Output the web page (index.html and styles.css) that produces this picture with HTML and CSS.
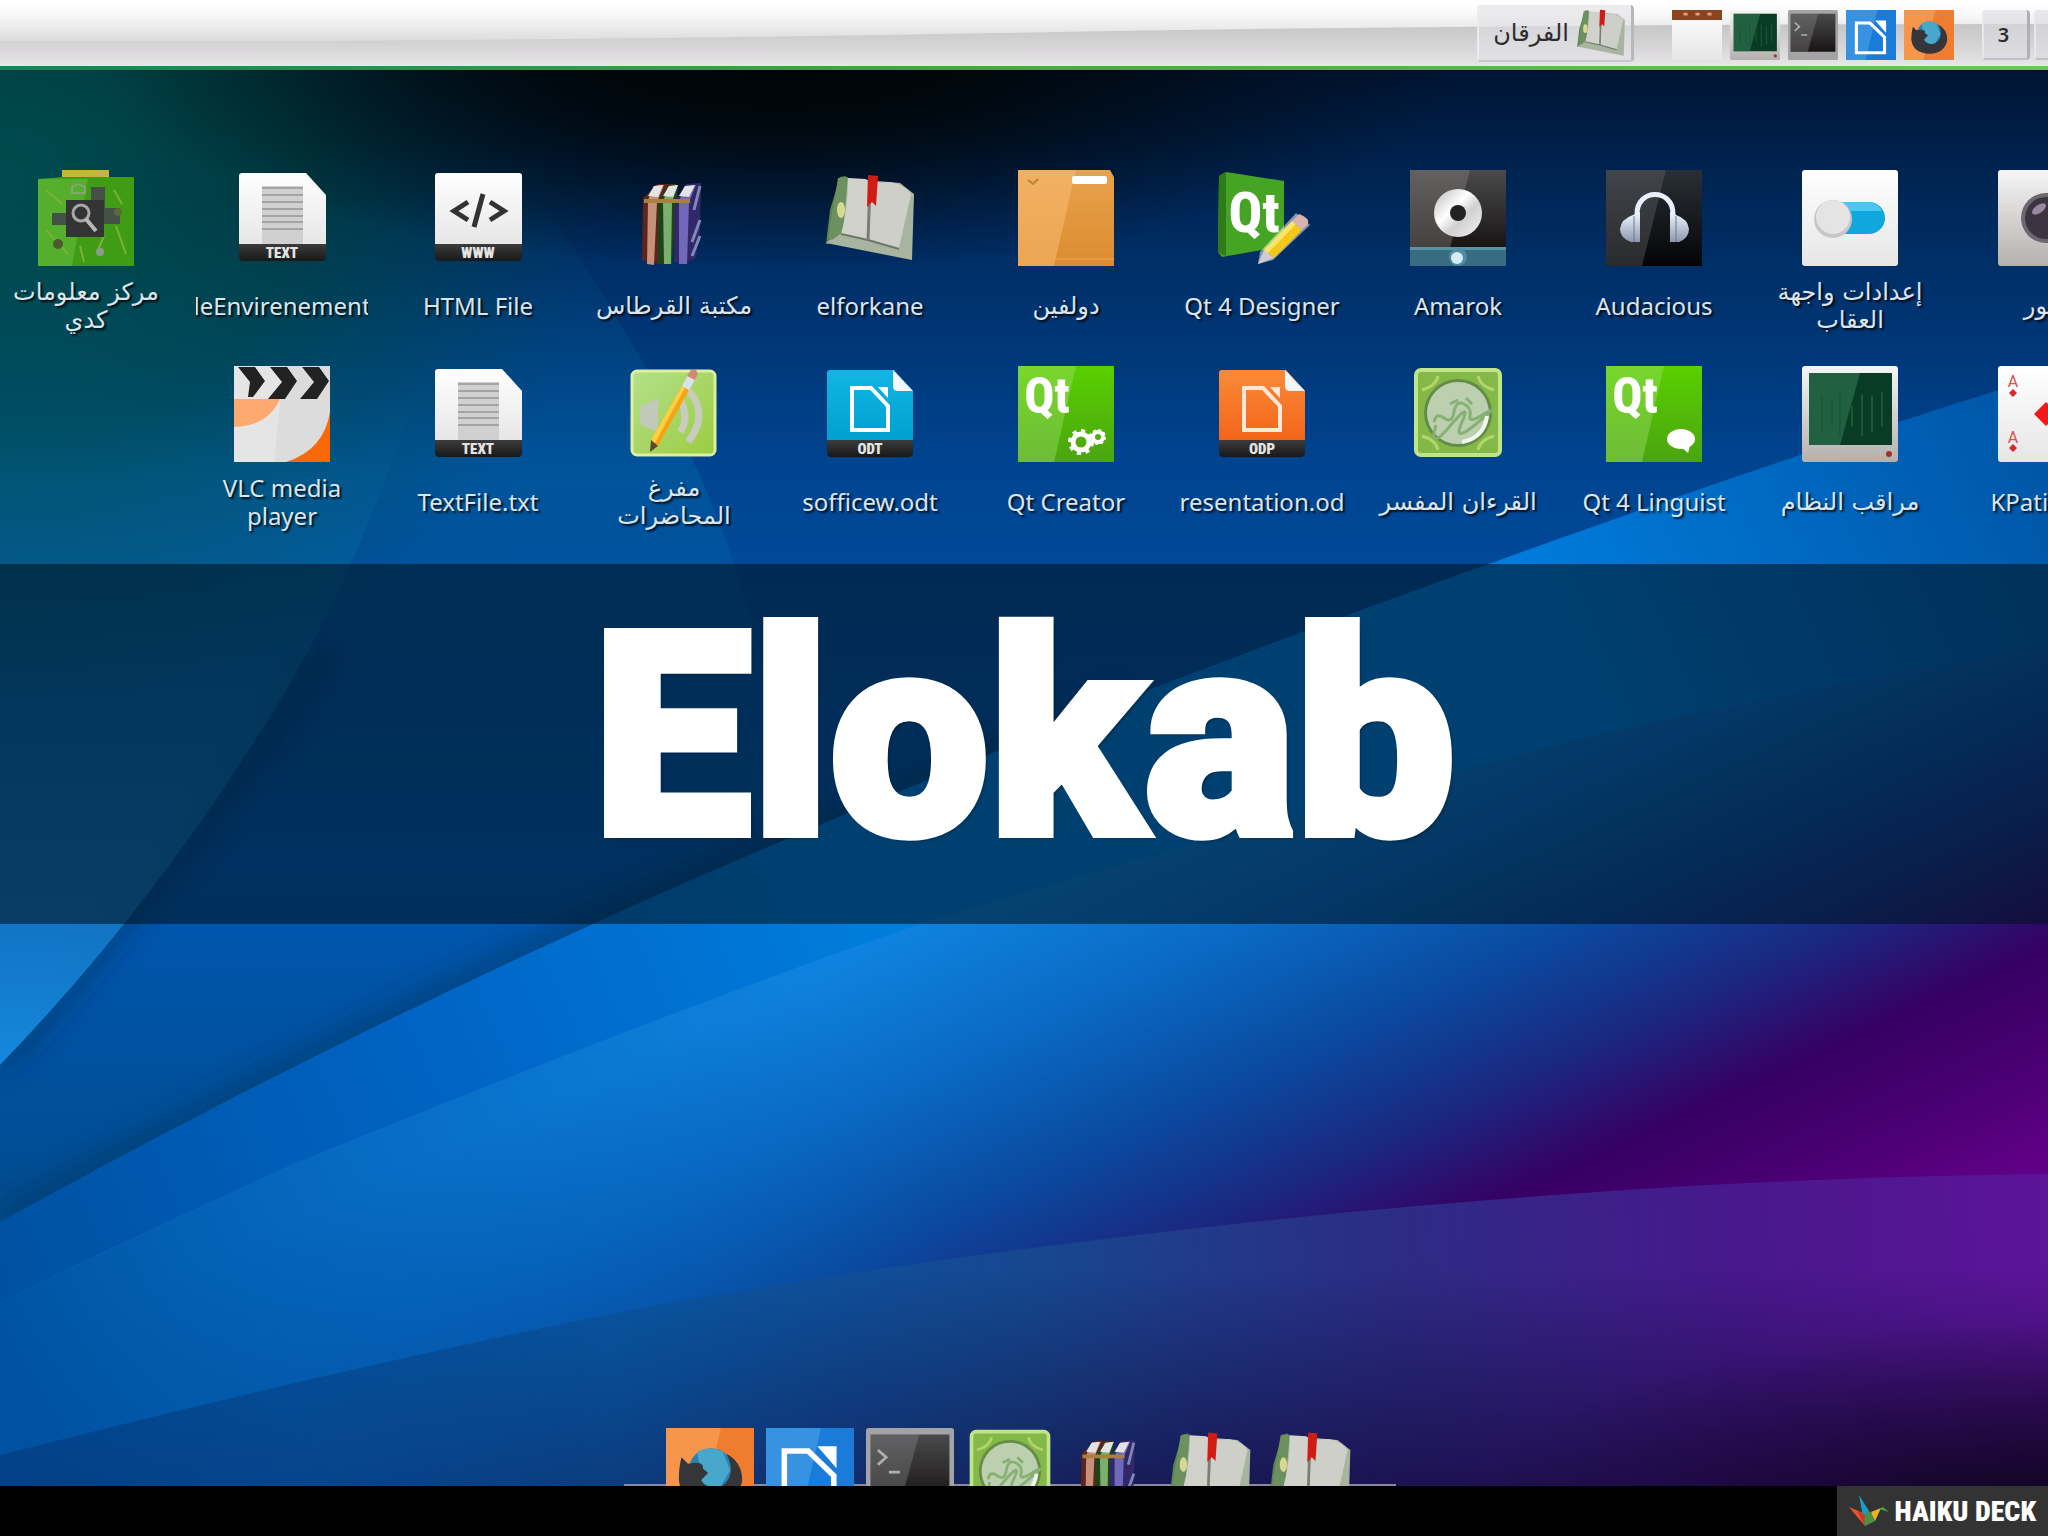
FILE: index.html
```
<!DOCTYPE html>
<html lang="en">
<head>
<meta charset="utf-8">
<meta name="viewport" content="width=device-width, initial-scale=1">
<title>Elokab</title>
<link rel="stylesheet" href="styles.css">
</head>
<body>

<!-- Shared icon shapes and gradients -->
<svg class="defs" width="0" height="0" aria-hidden="true">
  <defs>
    <linearGradient id="g-paper" x1="0" y1="0" x2="0" y2="1"><stop offset="0" stop-color="#fff"/><stop offset="1" stop-color="#e6e6e6"/></linearGradient>
    <linearGradient id="g-silver" x1="0" y1="0" x2="0" y2="1"><stop offset="0" stop-color="#f6f6f6"/><stop offset="1" stop-color="#b4b0ae"/></linearGradient>
    <linearGradient id="g-strip" x1="0" y1="0" x2="0" y2="1"><stop offset="0" stop-color="#3c3c3c"/><stop offset="1" stop-color="#181818"/></linearGradient>
    <linearGradient id="g-green" x1="0" y1="0" x2="0" y2="1"><stop offset="0" stop-color="#5ad000"/><stop offset="1" stop-color="#4aa410"/></linearGradient>
    <linearGradient id="g-orange" x1="0" y1="0" x2="0" y2="1"><stop offset="0" stop-color="#fb8a3a"/><stop offset="1" stop-color="#f26418"/></linearGradient>
    <linearGradient id="g-cyan" x1="0" y1="0" x2="0" y2="1"><stop offset="0" stop-color="#10b6e4"/><stop offset="1" stop-color="#00a0d0"/></linearGradient>
    <linearGradient id="g-folder" x1="0" y1="0" x2="0" y2="1"><stop offset="0" stop-color="#e8a24c"/><stop offset="1" stop-color="#dc8c30"/></linearGradient>
    <linearGradient id="g-dark" x1="0" y1="0" x2="0" y2="1"><stop offset="0" stop-color="#4a4a4c"/><stop offset="1" stop-color="#181414"/></linearGradient>
    <linearGradient id="g-black" x1="0" y1="0" x2="0" y2="1"><stop offset="0" stop-color="#2a3036"/><stop offset="1" stop-color="#040406"/></linearGradient>
    <linearGradient id="g-lime" x1="0" y1="0" x2="1" y2="1"><stop offset="0" stop-color="#b4e08c"/><stop offset="1" stop-color="#9ccc40"/></linearGradient>
    <linearGradient id="g-disc" x1="0" y1="0" x2="1" y2="1"><stop offset="0" stop-color="#b8b8b8"/><stop offset=".4" stop-color="#fff"/><stop offset=".6" stop-color="#d0d0d0"/><stop offset="1" stop-color="#f4f4f4"/></linearGradient>
    <linearGradient id="g-phone" x1="0" y1="0" x2="0" y2="1"><stop offset="0" stop-color="#f4f8ff"/><stop offset="1" stop-color="#8c98b0"/></linearGradient>

    <symbol id="i-doc" viewBox="0 0 96 96">
      <path d="M8 3H72L92 25V76H5V6Q5 3 8 3Z" fill="url(#g-paper)"/>
      <path d="M28 16H69V74H28Z" fill="#d0d0d0"/>
      <path d="M28 18H69M28 25H69M28 32H69M28 39H69M28 46H69M28 52H69M28 59H69" stroke="#a4a4a4" stroke-width="2"/>
      <path d="M5 74H92V86Q92 91 88 91H9Q5 91 5 86Z" fill="url(#g-strip)"/>
      <text class="tag" x="48" y="88">TEXT</text>
    </symbol>
    <symbol id="i-html" viewBox="0 0 96 96">
      <path d="M8 3H89Q92 3 92 6V76H5V6Q5 3 8 3Z" fill="url(#g-paper)"/>
      <path d="M38 32 24 41 38 50M60 32 74 41 60 50M53 24 44 57" fill="none" stroke="#333" stroke-width="5"/>
      <path d="M5 74H92V86Q92 91 88 91H9Q5 91 5 86Z" fill="url(#g-strip)"/>
      <text class="tag" x="48" y="88">WWW</text>
    </symbol>
    <symbol id="i-odt" viewBox="0 0 96 96">
      <path d="M8 4H72L91 25V76H5V7Q5 4 8 4Z" fill="url(#g-cyan)"/>
      <path d="M71 4 91 25H76Q71 25 71 20Z" fill="#f4f8fa"/>
      <path d="M30 22H49L66 40V64H30Z" fill="none" stroke="#fff" stroke-width="4"/>
      <path d="M56 21H66V32Z" fill="#fff"/>
      <path d="M5 74H91V86Q91 91 87 91H9Q5 91 5 86Z" fill="url(#g-strip)"/>
      <text class="tag" x="48" y="88">ODT</text>
    </symbol>
    <symbol id="i-odp" viewBox="0 0 96 96">
      <path d="M8 4H72L91 25V76H5V7Q5 4 8 4Z" fill="url(#g-orange)"/>
      <path d="M71 4 91 25H76Q71 25 71 20Z" fill="#f4f8fa"/>
      <path d="M30 22H49L66 40V64H30Z" fill="none" stroke="#ffe8d8" stroke-width="4"/>
      <path d="M56 21H66V32Z" fill="#ffe8d8"/>
      <path d="M5 74H91V86Q91 91 87 91H9Q5 91 5 86Z" fill="url(#g-strip)"/>
      <text class="tag" x="48" y="88">ODP</text>
    </symbol>
    <symbol id="i-chip" viewBox="0 0 96 96">
      <path d="M0 9 24 7V0H71V7H96V96H0Z" fill="#3f9c14"/>
      <path d="M24 0H71V7H24Z" fill="#c8b43c"/>
      <path d="M0 9H50L34 96H0Z" fill="#6cc044" opacity=".5"/>
      <path d="M8 20 24 34M8 60 30 84M78 56 88 84M60 80 66 66M42 76 46 92M76 20 84 34M12 44H26" stroke="#78b43c" stroke-width="2" fill="none"/>
      <path d="M53 17H67V38H82V54H66V62H53ZM14 43H30V55H14Z" fill="#455048"/>
      <path d="M34 17 39 14 47 17V23H34Z" fill="none" stroke="#86a476" stroke-width="2"/>
      <circle cx="20" cy="74" r="5" fill="#4c5a34"/><circle cx="80" cy="42" r="4" fill="#5a6c34"/><circle cx="62" cy="82" r="4" fill="#8c9c8c"/>
      <path d="M28 30H66V67H28Z" fill="#343434"/>
      <circle cx="43" cy="43" r="8" fill="none" stroke="#a8a8a8" stroke-width="3"/><path d="M48 49 58 61" stroke="#b8b8b8" stroke-width="4"/>
    </symbol>
    <symbol id="i-books" viewBox="-8 0 96 96">
      <path d="M9 28 24 14H42L40 28 30 95 8 90Z" fill="#5c241c"/>
      <path d="M14 30 20 16 30 15 23 32 20 95 13 94Z" fill="#c89078"/>
      <path d="M24 30 36 14 44 16 38 94 24 94Z" fill="#1c4418"/>
      <path d="M29 32 34 17 44 15 38 32 37 94 30 94Z" fill="#7cae6c"/>
      <path d="M40 32 52 14 67 13 66 60 62 88 50 94 40 92Z" fill="#302868"/>
      <path d="M45 32 50 17 62 15 55 32 53 94 45 94Z" fill="#7068b8"/>
      <path d="M14 26 20 16 29 15 24 27ZM29 26 35 16 44 15 39 27ZM45 26 51 16 61 15 55 27Z" fill="#e4e4e4"/>
      <path d="M10 31H56" stroke="#a88040" stroke-width="4"/>
      <path d="M60 40 66 16M58 72 66 50M58 86 66 66" stroke="#8088b8" stroke-width="3"/>
    </symbol>
    <symbol id="i-book" viewBox="0 0 96 96">
      <path d="M18 7 24 6 22 50 14 72 4 74 8 40Z" fill="#5c8450"/>
      <path d="M20 8 44 10 78 13 92 24 90 90 4 73 13 66Z" fill="#a9b4a0"/>
      <path d="M16 8 26 7 21 62 10 70 6 68Z" fill="#6c9060"/>
      <path d="M26 8 44 9 48 13 46 70 19 64Q26 40 26 8Z" fill="#d2d2cc"/>
      <path d="M50 13 68 12Q82 14 89 24L77 78 47 70Z" fill="#cfcfca"/>
      <path d="M19 64 46 70 77 79" fill="none" stroke="#6c7868" stroke-width="2"/>
      <path d="M48 12 46 70" stroke="#788074" stroke-width="3"/>
      <ellipse cx="19" cy="40" rx="4" ry="8" fill="#d8d890"/>
      <path d="M46 5 56 6 54 36 50 32 45 37Z" fill="#d01c14"/>
    </symbol>
    <symbol id="i-folder" viewBox="0 0 96 96">
      <path d="M0 0H92L96 7V96H0Z" fill="url(#g-folder)"/>
      <path d="M0 0H58L36 96H0Z" fill="#fcc078" opacity=".5"/>
      <path d="M10 10 15 14 20 9" fill="none" stroke="#b88440" stroke-width="2"/>
      <rect x="54" y="6" width="35" height="8" rx="2" fill="#fff"/>
      <path d="M0 89H96" stroke="#f0a850" stroke-width="1"/>
    </symbol>
    <symbol id="i-designer" viewBox="0 0 96 96">
      <path d="M5 6 12 2 70 11V76L8 87 4 82Z" fill="#46a424"/>
      <path d="M5 6 12 2V86L4 82Z" fill="#2c7c18"/>
      <text class="qt" x="40" y="62" font-size="56">Qt</text>
      <path d="M46 82 82 43 96 55 59 90 44 94Z" fill="#fff" opacity=".5"/>
      <path d="M50 80 78 51 88 60 60 88Z" fill="#f4c818"/>
      <path d="M50 80 78 51 82 54 53 84Z" fill="#fce468"/>
      <path d="M78 51 85 44Q96 48 94 54L88 60Z" fill="#d8b4b0"/>
      <path d="M50 80 60 88 44 94Z" fill="#d0ccd0"/>
    </symbol>
    <symbol id="i-amarok" viewBox="0 0 96 96">
      <path d="M0 0H96V78H0Z" fill="url(#g-dark)"/>
      <path d="M0 0H60L40 78H0Z" fill="#8a8480" opacity=".4"/>
      <circle cx="48" cy="43" r="24" fill="url(#g-disc)"/><circle cx="48" cy="43" r="8" fill="#222"/>
      <path d="M0 77H96V96H0Z" fill="#386c80"/><path d="M0 77H96V80H0Z" fill="#5894a4"/>
      <circle cx="48" cy="87" r="9" fill="#508ca4"/><circle cx="47" cy="88" r="6" fill="#d4ecf4"/>
    </symbol>
    <symbol id="i-audacious" viewBox="0 0 96 96">
      <path d="M0 0H96V96H0Z" fill="url(#g-black)"/>
      <path d="M0 0H60L36 96H0Z" fill="#64666a" opacity=".4"/>
      <path d="M31 56V44C31 18 67 18 67 44V56" fill="none" stroke="#e8f0fc" stroke-width="5"/>
      <path d="M27 45 34 42V72H25Q14 68 14 59 15 49 27 45ZM70 45 64 42V72H73Q83 68 83 59 82 49 70 45Z" fill="url(#g-phone)"/>
      <path d="M28 46V72M70 46V72" stroke="#6c7890" stroke-width="1"/>
    </symbol>
    <symbol id="i-toggle" viewBox="0 0 96 96">
      <rect width="96" height="96" rx="3" fill="url(#g-paper)"/>
      <path d="M38 32H67A16 16 0 0 1 67 64H38Z" fill="#10a8dc"/><path d="M40 32H67Q76 33 80 41H40Z" fill="#48c8f0"/>
      <circle cx="31" cy="49" r="19" fill="#c8c6c6"/><circle cx="31" cy="47" r="17" fill="#e4e4e4"/>
    </symbol>
    <symbol id="i-camera" viewBox="0 0 96 96">
      <rect width="96" height="96" rx="3" fill="url(#g-silver)"/>
      <circle cx="48" cy="48" r="25" fill="#6c6870"/><circle cx="48" cy="48" r="21" fill="#3c3440"/><ellipse cx="41" cy="39" rx="8" ry="4" fill="#9888a0" transform="rotate(-35 41 39)"/>
    </symbol>
    <symbol id="i-vlc" viewBox="0 0 96 96">
      <path d="M0 0H96V96H0Z" fill="#dcdcdc"/>
      <path d="M0 33H46Q34 60 0 61Z" fill="#fc8c40"/>
      <path d="M96 46V96H52Q90 84 96 46Z" fill="#fa6808"/>
      <path d="M0 0H50L40 96H0Z" fill="#fff" opacity=".25"/>
      <path d="M4 1H21L31 15 19 31H14L16 16ZM36 1H53L63 15 51 33H34L48 16ZM68 1H85L95 15 83 33H66L80 16Z" fill="#222"/>
    </symbol>
    <symbol id="i-audio" viewBox="0 0 96 96">
      <rect x="6" y="5" width="83" height="84" rx="5" fill="url(#g-lime)" stroke="#dcf0a0" stroke-width="3"/>
      <path d="M14 40 22 37 32 32V66L22 62 14 58Z" fill="#c4c8b8"/>
      <path d="M54 34Q64 52 54 66M62 24Q84 48 62 76" fill="none" stroke="#c8ccbc" stroke-width="7"/>
      <path d="M25 74 56 20 63 24 32 80Z" fill="#f4a414"/><path d="M25 74 56 20 59 22 29 77Z" fill="#fcd040"/>
      <path d="M56 20 62 9 70 12 63 24Z" fill="#dce0e8"/><path d="M61 10 65 4H70L72 8 69 14Z" fill="#d08878"/><path d="M25 74 32 80 24 86Z" fill="#5c4830"/>
    </symbol>
    <symbol id="i-qtgear" viewBox="0 0 96 96">
      <path d="M0 0H96V96H0Z" fill="url(#g-green)"/><path d="M0 0H58L36 96H0Z" fill="#a4e070" opacity=".4"/>
      <text class="qt" x="29" y="47" font-size="50">Qt</text>
      <circle cx="63" cy="76" r="8" fill="none" stroke="#fff" stroke-width="5"/><circle cx="63" cy="76" r="11" fill="none" stroke="#fff" stroke-width="4" stroke-dasharray="4 4.600"/>
      <circle cx="80" cy="71" r="5" fill="none" stroke="#fff" stroke-width="4"/><circle cx="80" cy="71" r="7" fill="none" stroke="#fff" stroke-width="2" stroke-dasharray="3 2.500"/>
    </symbol>
    <symbol id="i-linguist" viewBox="0 0 96 96">
      <path d="M0 0H96V96H0Z" fill="url(#g-green)"/><path d="M0 0H58L36 96H0Z" fill="#a4e070" opacity=".4"/>
      <text class="qt" x="29" y="47" font-size="50">Qt</text>
      <ellipse cx="75" cy="73" rx="14" ry="10" fill="#fff"/><path d="M74 80H84L82 87Z" fill="#fff"/>
    </symbol>
    <symbol id="i-quran" viewBox="0 0 96 96">
      <rect x="6" y="4" width="84" height="85" rx="5" fill="#84b848" stroke="#c0e488" stroke-width="4"/>
      <path d="M12 24Q26 20 28 10M84 24Q70 20 68 10M12 70Q26 74 28 84M84 70Q70 74 68 84" fill="none" stroke="#b4d46c" stroke-width="3"/>
      <circle cx="48" cy="47" r="34" fill="#648c48"/><circle cx="48" cy="47" r="31" fill="#bcd0b0"/>
      <path d="M24 56Q26 46 34 52T44 46 54 38 60 50 74 48 66 58 52 56 40 60 26 59M40 38 48 34M56 32 62 38" fill="none" stroke="#86b074" stroke-width="3"/>
      <path d="M52 76Q74 72 77 50" fill="none" stroke="#f0f8ec" stroke-width="4"/>
    </symbol>
    <symbol id="i-monitor" viewBox="0 0 96 96">
      <rect width="96" height="96" rx="3" fill="url(#g-silver)"/>
      <path d="M7 7H90V79H7Z" fill="#083c24"/><path d="M7 7H58L38 79H7Z" fill="#3c8460" opacity=".5"/>
      <path d="M20 30V66M30 34V60M38 26V70M50 40V60M60 28V70M70 30V66M80 26V60" stroke="#1c5838" stroke-width="2"/>
      <circle cx="87" cy="88" r="3" fill="#a03030"/>
    </symbol>
    <symbol id="i-cards" viewBox="0 0 96 96">
      <rect width="96" height="96" rx="3" fill="url(#g-paper)"/>
      <text class="card" x="15" y="21">A</text><path d="M15 23 19 27 15 31 11 27Z" fill="#d82828"/>
      <text class="card" x="15" y="77">A</text><path d="M15 78 19 82 15 86 11 82Z" fill="#d82828"/>
      <path d="M48 36 60 48 48 60 36 48Z" fill="#f01818"/>
    </symbol>
    <symbol id="i-calendar" viewBox="0 0 96 96">
      <path d="M0 0H96V96H0Z" fill="url(#g-paper)"/><path d="M0 0H96V19H0Z" fill="#8c4420"/>
      <path d="M22 8H30M45 8H53M68 8H76" stroke="#d8a080" stroke-width="5"/>
    </symbol>
    <symbol id="i-terminal" viewBox="0 0 96 96">
      <rect width="96" height="96" rx="3" fill="#a4a4a6"/>
      <path d="M5 7H91V80H5Z" fill="url(#g-dark)"/><path d="M5 7H58L38 80H5Z" fill="#848488" opacity=".4"/>
      <path d="M13 24 22 32 13 40M25 48H37" fill="none" stroke="#b0b0b0" stroke-width="3"/>
    </symbol>
    <symbol id="i-office" viewBox="0 0 96 96">
      <path d="M0 0H96V96H0Z" fill="#1a7cd8"/><path d="M0 0H60L38 96H0Z" fill="#54a8ec" opacity=".5"/>
      <path d="M20 25H46L74 52V82H20Z" fill="none" stroke="#fff" stroke-width="6"/><path d="M56 20H77V44Z" fill="#fff"/>
    </symbol>
    <symbol id="i-firefox" viewBox="0 0 96 96">
      <path d="M0 0H96V96H0Z" fill="#f07c30"/><path d="M0 0H60L38 96H0Z" fill="#fcae68" opacity=".5"/>
      <circle cx="49" cy="46" r="24" fill="#2c80b4"/><path d="M34 26Q48 18 62 26L70 46 56 70 40 62Z" fill="#48a8cc"/>
      <path d="M17 32 24 39 32 38Q42 38 40 44L46 49 38 57Q46 68 60 64 78 52 66 28 84 38 83 58 78 83 49 84 16 82 14 56Q14 42 17 32Z" fill="#36363a"/>
    </symbol>
  </defs>
</svg>

<header class="panel">
  <svg class="panel-sheen" viewBox="0 0 2048 66" preserveAspectRatio="none" aria-hidden="true">
    <defs>
      <linearGradient id="p-top" x1="0" y1="0" x2="0" y2="1"><stop offset="0" stop-color="#fff"/><stop offset=".2" stop-color="#fafafa"/><stop offset=".6" stop-color="#dedede"/><stop offset="1" stop-color="#dcdcdc"/></linearGradient>
      <linearGradient id="p-low" x1="0" y1="0" x2="0" y2="1"><stop offset="0" stop-color="#c6c6c6"/><stop offset=".7" stop-color="#dcdadc"/><stop offset="1" stop-color="#e8e8e8"/></linearGradient>
    </defs>
    <path d="M0 0H2048V66H0Z" fill="url(#p-top)"/>
    <path d="M0 41Q500 42 1000 33T2048 24V66H0Z" fill="url(#p-low)"/>
  </svg>
  <nav class="panel-items" aria-label="Panel">
    <button class="task" type="button"><span lang="ar" dir="rtl">الفرقان</span><svg class="task-icon"><use href="#i-book"/></svg></button>
    <div class="launchers">
      <button type="button" aria-label="Calendar"><svg><use href="#i-calendar"/></svg></button>
      <button type="button" aria-label="System monitor"><svg><use href="#i-monitor"/></svg></button>
      <button type="button" aria-label="Terminal"><svg><use href="#i-terminal"/></svg></button>
      <button type="button" aria-label="Office"><svg><use href="#i-office"/></svg></button>
      <button type="button" aria-label="Firefox"><svg><use href="#i-firefox"/></svg></button>
    </div>
    <div class="pager">
      <button type="button">3</button>
      <button type="button" aria-label="Desktop 2"></button>
    </div>
  </nav>
</header>

<main class="desktop">
  <svg class="wallpaper" viewBox="0 70 2048 1416" preserveAspectRatio="none" aria-hidden="true">
    <defs>
      <linearGradient id="w-base" gradientUnits="userSpaceOnUse" x1="1000" y1="70" x2="1000" y2="1200"><stop offset="0" stop-color="#001432"/><stop offset=".12" stop-color="#00285a"/><stop offset=".35" stop-color="#004490"/><stop offset=".7" stop-color="#0058b4"/><stop offset="1" stop-color="#004c90"/></linearGradient>
      <radialGradient id="w-teal" gradientUnits="userSpaceOnUse" cx="0" cy="0" r="1" gradientTransform="translate(0 180) scale(600 540)"><stop offset="0" stop-color="#004c4e"/><stop offset=".5" stop-color="#003e40" stop-opacity=".85"/><stop offset="1" stop-color="#003c44" stop-opacity="0"/></radialGradient>
      <radialGradient id="w-black" gradientUnits="userSpaceOnUse" cx="0" cy="0" r="1" gradientTransform="translate(780 60) scale(680 210)"><stop offset="0" stop-color="#000406"/><stop offset=".35" stop-color="#000608" stop-opacity=".85"/><stop offset="1" stop-color="#000810" stop-opacity="0"/></radialGradient>
      <linearGradient id="w-arc" gradientUnits="userSpaceOnUse" x1="560" y1="200" x2="560" y2="760"><stop offset="0" stop-color="#0078b0" stop-opacity="0"/><stop offset=".5" stop-color="#0078b0" stop-opacity=".3"/><stop offset="1" stop-color="#0078b0" stop-opacity="0"/></linearGradient>
      <linearGradient id="w-disc" gradientUnits="userSpaceOnUse" x1="0" y1="400" x2="0" y2="1060"><stop offset="0" stop-color="#1080b0" stop-opacity="0"/><stop offset=".3" stop-color="#1080b0" stop-opacity=".25"/><stop offset=".8" stop-color="#1478c8" stop-opacity=".9"/><stop offset="1" stop-color="#1488dc"/></linearGradient>
      <linearGradient id="w-strip" gradientUnits="userSpaceOnUse" x1="0" y1="1300" x2="2048" y2="400"><stop offset="0" stop-color="#0050a0"/><stop offset=".22" stop-color="#0064c4"/><stop offset=".42" stop-color="#007cdc"/><stop offset=".75" stop-color="#007cdc"/><stop offset="1" stop-color="#0054a4"/></linearGradient>
      <linearGradient id="w-mid" gradientUnits="userSpaceOnUse" x1="850" y1="959" x2="1136" y2="1578"><stop offset="0" stop-color="#0e82de"/><stop offset=".2" stop-color="#0a6ac4"/><stop offset=".4" stop-color="#0a4aa0"/><stop offset=".57" stop-color="#1a2880"/><stop offset=".72" stop-color="#360064"/><stop offset=".88" stop-color="#4c0074"/><stop offset="1" stop-color="#600086"/></linearGradient>
      <linearGradient id="w-left" gradientUnits="userSpaceOnUse" x1="0" y1="1350" x2="800" y2="950"><stop offset="0" stop-color="#0052a0"/><stop offset="1" stop-color="#0060b8" stop-opacity="0"/></linearGradient>
      <linearGradient id="w-low" gradientUnits="userSpaceOnUse" x1="0" y1="1400" x2="2048" y2="1260"><stop offset="0" stop-color="#004c98"/><stop offset=".3" stop-color="#0858a4"/><stop offset=".5" stop-color="#164890"/><stop offset=".68" stop-color="#2c2c84"/><stop offset=".85" stop-color="#48188c"/><stop offset="1" stop-color="#5c1498"/></linearGradient>
      <linearGradient id="w-shade" gradientUnits="userSpaceOnUse" x1="0" y1="1270" x2="0" y2="1490"><stop offset="0" stop-color="#0c0834" stop-opacity="0"/><stop offset="1" stop-color="#140434" stop-opacity=".65"/></linearGradient>
      <linearGradient id="w-fade" gradientUnits="userSpaceOnUse" x1="300" y1="0" x2="1200" y2="0"><stop offset="0" stop-color="#444"/><stop offset="1" stop-color="#fff"/></linearGradient>
      <mask id="w-fade-mask"><path d="M0 1100H2048V1486H0Z" fill="url(#w-fade)"/></mask>
      <radialGradient id="w-corner" gradientUnits="userSpaceOnUse" cx="0" cy="0" r="1" gradientTransform="translate(2080 1520) scale(620 200)"><stop offset="0" stop-color="#0c0418"/><stop offset="1" stop-color="#14062c" stop-opacity="0"/></radialGradient>
      <filter id="w-blur" x="-10%" y="-10%" width="120%" height="120%"><feGaussianBlur stdDeviation="14"/></filter>
    </defs>
    <path d="M0 70H2048V1486H0Z" fill="url(#w-base)"/>
    <path d="M0 70H800V900H0Z" fill="url(#w-teal)"/>
    <path d="M0 70H1500V300H0Z" fill="url(#w-black)"/>
    <path d="M490 130Q690 400 745 600T750 780L0 800V150Z" fill="url(#w-arc)"/>
    <path d="M330 650Q240 790 121 923 60 1000 0 1065" fill="none" stroke="#002850" stroke-opacity=".5" stroke-width="20" filter="url(#w-blur)"/>
    <path d="M420 380Q350 600 248 751 140 920 0 1065V380Z" fill="url(#w-disc)"/>
    <path d="M1122 700C900 790 700 875 595 923 333 1042 150 1140 0 1222" fill="none" stroke="#00305c" stroke-opacity=".6" stroke-width="22" filter="url(#w-blur)"/>
    <path d="M2048 375C1894 420 1500 555 1122 700 900 790 700 875 595 923 333 1042 150 1140 0 1222V1486H2048Z" fill="url(#w-strip)"/>
    <path d="M2048 645C1850 680 1600 730 1488 764 1300 812 1150 855 914 926 700 1000 450 1100 287 1167 150 1230 60 1272 0 1303V1486H2048Z" fill="url(#w-mid)"/>
    <path d="M2048 645C1850 680 1600 730 1488 764 1300 812 1150 855 914 926 700 1000 450 1100 287 1167 150 1230 60 1272 0 1303V1486H2048Z" fill="url(#w-left)"/>
    <path d="M0 1455C200 1404 450 1345 653 1306 900 1262 1150 1230 1416 1206 1650 1186 1850 1176 2048 1174V1486H0Z" fill="url(#w-low)"/>
    <g mask="url(#w-fade-mask)">
      <path d="M0 1455C200 1404 450 1345 653 1306 900 1262 1150 1230 1416 1206 1650 1186 1850 1176 2048 1174V1486H0Z" fill="url(#w-shade)"/>
    </g>
    <path d="M1300 1300H2048V1486H1300Z" fill="url(#w-corner)"/>
  </svg>

  <nav class="icons" aria-label="Desktop">
    <a href="#" lang="ar"><svg><use href="#i-chip"/></svg><span>مركز معلومات كدي</span></a>
    <a href="#"><svg><use href="#i-doc"/></svg><span class="clip">leEnvirenement</span></a>
    <a href="#"><svg><use href="#i-html"/></svg><span>HTML File</span></a>
    <a href="#" lang="ar"><svg><use href="#i-books"/></svg><span>مكتبة القرطاس</span></a>
    <a href="#"><svg><use href="#i-book"/></svg><span>elforkane</span></a>
    <a href="#" lang="ar"><svg><use href="#i-folder"/></svg><span>دولفين</span></a>
    <a href="#"><svg><use href="#i-designer"/></svg><span>Qt 4 Designer</span></a>
    <a href="#"><svg><use href="#i-amarok"/></svg><span>Amarok</span></a>
    <a href="#"><svg><use href="#i-audacious"/></svg><span>Audacious</span></a>
    <a href="#" lang="ar"><svg><use href="#i-toggle"/></svg><span>إعدادات واجهة العقاب</span></a>
    <a href="#" lang="ar"><svg><use href="#i-camera"/></svg><span>صور</span></a>

    <a href="#" class="second"><svg><use href="#i-vlc"/></svg><span>VLC media player</span></a>
    <a href="#"><svg><use href="#i-doc"/></svg><span>TextFile.txt</span></a>
    <a href="#" lang="ar"><svg><use href="#i-audio"/></svg><span>مفرغ المحاضرات</span></a>
    <a href="#"><svg><use href="#i-odt"/></svg><span>sofficew.odt</span></a>
    <a href="#"><svg><use href="#i-qtgear"/></svg><span>Qt Creator</span></a>
    <a href="#"><svg><use href="#i-odp"/></svg><span class="clip">resentation.od</span></a>
    <a href="#" lang="ar"><svg><use href="#i-quran"/></svg><span>القرءان المفسر</span></a>
    <a href="#"><svg><use href="#i-linguist"/></svg><span>Qt 4 Linguist</span></a>
    <a href="#" lang="ar"><svg><use href="#i-monitor"/></svg><span>مراقب النظام</span></a>
    <a href="#"><svg><use href="#i-cards"/></svg><span>KPatience</span></a>
  </nav>

  <section class="banner"><h1>Elokab</h1></section>

  <nav class="dock" aria-label="Dock">
    <button type="button" aria-label="Firefox"><svg><use href="#i-firefox"/></svg></button>
    <button type="button" aria-label="Office"><svg><use href="#i-office"/></svg></button>
    <button type="button" aria-label="Terminal"><svg><use href="#i-terminal"/></svg></button>
    <button type="button" aria-label="Quran"><svg><use href="#i-quran"/></svg></button>
    <button type="button" aria-label="Library"><svg><use href="#i-books"/></svg></button>
    <button type="button" aria-label="elforkane"><svg><use href="#i-book"/></svg></button>
    <button type="button" aria-label="elforkane"><svg><use href="#i-book"/></svg></button>
  </nav>
</main>

<footer class="footer">
  <a class="brand" href="#">
    <svg viewBox="0 0 40 32" aria-hidden="true">
      <path d="M0 12 14 18 16 31Z" fill="#e8562c"/><path d="M10 0 20 16 14 22Z" fill="#1c9cc8"/>
      <path d="M14 20 20 16 24 20 26 26 16 31Z" fill="#4c9048"/><path d="M22 17 32 13 26 26Z" fill="#f0b020"/><path d="M30 14 34 12 40 17Z" fill="#3ca850"/>
      <path d="M8 16 16 20 15 29Z" fill="#c43c28"/>
    </svg>
    <span>HAIKU DECK</span>
  </a>
</footer>
</body>
</html>
```
FILE: styles.css
```
* { box-sizing: border-box; }

body {
  margin: 0;
  min-height: 100vh;
  display: flex;
  flex-direction: column;
  overflow-x: hidden;
  background: #000;
  font-family: "Noto Sans", "DejaVu Sans", sans-serif;
}

button {
  margin: 0;
  padding: 0;
  border: 0;
  background: none;
  font: inherit;
  color: inherit;
}

svg { display: block; }
.defs { position: absolute; }

.tag {
  font: 900 15px "Roboto Condensed", Roboto, sans-serif;
  fill: #e4e4e4;
  text-anchor: middle;
}

.qt {
  font-family: "Roboto Condensed", Roboto, sans-serif;
  font-weight: 800;
  fill: #fff;
  text-anchor: middle;
}

.card {
  font: 16px Roboto, sans-serif;
  fill: #d85050;
  text-anchor: middle;
}

/* Top panel */
.panel {
  position: relative;
  height: 70px;
  overflow: hidden;
  background: #dcdcdc;
  border-bottom: 4px solid #50a838;
  border-image: linear-gradient(90deg, #108858, #4ca840 50%, #6cc850) 1;
}

.panel-sheen {
  position: absolute;
  inset: 0;
  width: 100%;
  height: 66px;
}

.panel-items {
  position: relative;
  display: flex;
  justify-content: flex-end;
  align-items: flex-start;
  margin-right: -34px;
  padding-top: 5px;
  color: #2c2c2c;
}

.task {
  display: flex;
  align-items: center;
  justify-content: flex-end;
  gap: 6px;
  width: 157px;
  height: 57px;
  margin-right: 38px;
  padding-right: 4px;
  border-right: 3px solid #b8b8bc;
  border-bottom: 2px solid #c8c8cc;
  border-left: 2px solid #ececec;
  border-radius: 4px;
  background: rgba(225, 225, 230, .6);
  font-family: "DejaVu Sans", sans-serif;
  font-size: 24px;
}

.task-icon {
  width: 52px;
  height: 52px;
}

.launchers {
  display: flex;
  gap: 8px;
  margin: 5px 28px 0 0;
}

.launchers svg {
  width: 50px;
  height: 50px;
}

.pager {
  display: flex;
  gap: 4px;
  padding-top: 5px;
}

.pager button {
  width: 48px;
  height: 50px;
  padding-right: 4px;
  border-right: 3px solid #b0b0b4;
  border-bottom: 2px solid #c0c0c4;
  border-left: 2px solid #e8e8e8;
  border-radius: 4px;
  background: rgba(220, 220, 226, .6);
  font-size: 20px;
  font-weight: 600;
}

/* Desktop */
.desktop {
  position: relative;
  flex: 1;
  display: flex;
  flex-direction: column;
  padding-top: 100px;
  overflow: hidden;
}

.wallpaper {
  position: absolute;
  inset: 0;
  width: 100%;
  height: 100%;
}

.icons {
  position: relative;
  display: grid;
  grid-template-columns: repeat(11, 196px);
  row-gap: 32px;
  margin-left: -12px;
}

.icons a {
  display: flex;
  flex-direction: column;
  align-items: center;
  gap: 12px;
  color: #dce4ec;
  text-decoration: none;
}

.icons .second { grid-column-start: 2; }

.icons svg {
  width: 96px;
  height: 96px;
}

.icons span {
  display: flex;
  align-items: center;
  justify-content: center;
  width: 172px;
  height: 56px;
  font-size: 24px;
  line-height: 28px;
  text-align: center;
  text-shadow: 2px 2px 2px rgba(0, 0, 0, .8);
}

.icons [lang="ar"] span {
  padding: 0 5px;
  direction: rtl;
  font-family: "DejaVu Sans", sans-serif;
}

.icons .clip {
  overflow: hidden;
  white-space: nowrap;
}

.banner {
  position: relative;
  margin-top: 34px;
  padding: 8px 0 22px;
  background: rgba(0, 18, 28, .56);
}

h1 {
  margin: 0;
  color: #fff;
  font-family: Roboto, sans-serif;
  font-size: 284px;
  font-weight: 900;
  line-height: 330px;
  text-align: center;
  text-shadow: 3px 3px 4px rgba(0, 0, 0, .6);
  -webkit-text-stroke: 8px #fff;
}

.dock {
  position: relative;
  display: flex;
  gap: 12px;
  align-self: center;
  height: 58px;
  margin: auto 28px 0 0;
  padding: 0 42px;
  overflow: hidden;
  background: linear-gradient(transparent 56px, #8a8a9c 56px);
}

.dock svg {
  width: 88px;
  height: 88px;
}

/* Footer */
.footer {
  display: flex;
  justify-content: flex-end;
  height: 50px;
  background: #000;
}

.brand {
  display: flex;
  align-items: center;
  gap: 6px;
  padding: 0 12px;
  background: #333;
  color: #fff;
  font-family: "Roboto Condensed", Roboto, sans-serif;
  font-size: 28px;
  font-weight: 900;
  text-decoration: none;
}

.brand svg {
  width: 40px;
  height: 32px;
}
```
